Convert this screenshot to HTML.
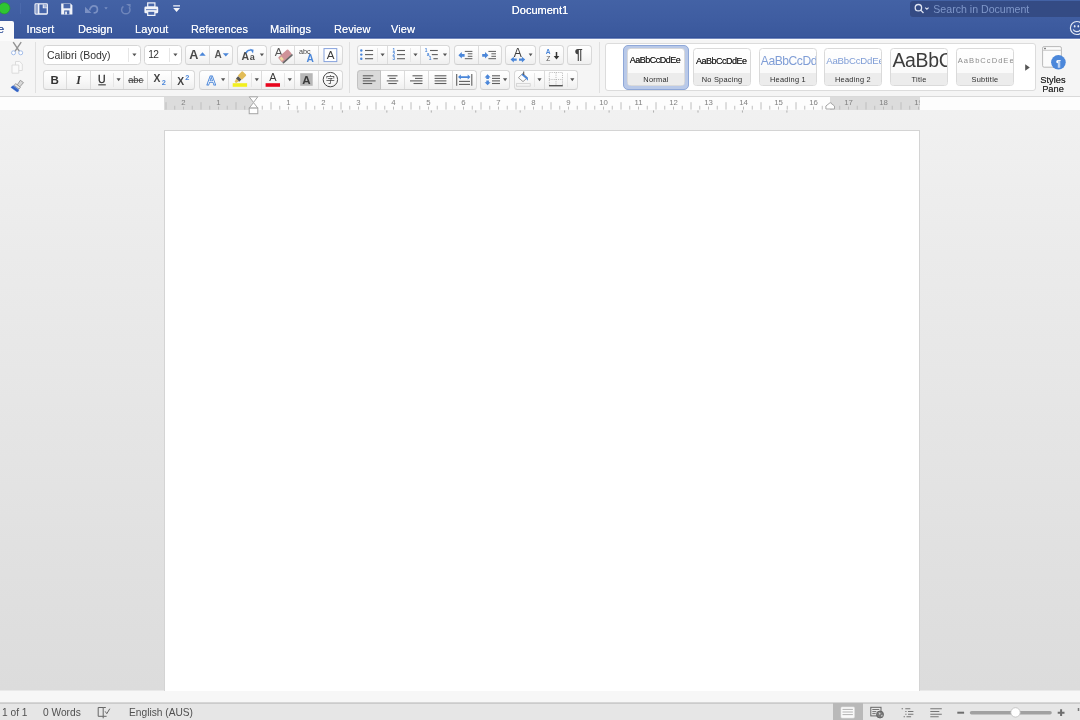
<!DOCTYPE html>
<html><head><meta charset="utf-8"><title>Document1</title>
<style>
*{box-sizing:border-box;margin:0;padding:0}
html,body{width:1080px;height:720px;overflow:hidden}
body{position:relative;filter:blur(.4px);font-family:"Liberation Sans",sans-serif;background:#e4e4e4;color:#333}
.abs{position:absolute}
#ov{left:0;top:0;pointer-events:none}
#title{left:0;top:0;width:1080px;height:40px;background:linear-gradient(#4362a5,#3f5da1 19px,#3a589c 37px,#33519a 37px,#33519a 38px,#7388bb 38px,#7388bb 39px,#fcfcfc 39px)}
.doc{position:absolute;left:0;width:1080px;top:3px;text-align:center;color:#fff;font-size:11px;line-height:14px;text-shadow:0 0 .5px #fff}
.tab{position:absolute;top:22px;color:#f6f8fc;font-size:11px;line-height:14px;white-space:nowrap;text-shadow:0 0 .4px #f6f8fc;letter-spacing:.08px}
#hometab{left:-4px;top:20.5px;width:18px;height:20px;background:#fbfbfb;border-radius:2px 2px 0 0}
#search{left:910px;top:1px;width:180px;height:16px;background:#344b84;border-radius:3px}
#search span{position:absolute;left:23.3px;top:1.3px;font-size:10.6px;line-height:14px;color:#7f97c9;white-space:nowrap}
#ribbon{left:0;top:40px;width:1080px;height:56px;background:#f5f5f5}
.grp{position:absolute;border:1px solid #d9d9d9;border-bottom-color:#cecece;border-radius:3.5px;background:linear-gradient(#fff,#f9f9f9 50%,#efefef)}
.inp{position:absolute;border:1px solid #d6d6d6;border-radius:3.5px;background:#fff}
.sep{position:absolute;width:1px;background:#dcdcdc}
.lsep{position:absolute;width:1px;background:#e6e6e6}
.vsep{position:absolute;width:1px;background:#e0e0e0;top:42px;height:51px}
.sel{position:absolute;background:#dadada;border:1px solid #c2c2c2}
#gallery{left:605px;top:43px;width:431px;height:48px;background:#fff;border:1px solid #dcdcdc;border-radius:3px}
.card{position:absolute;top:48px;width:58px;height:38px;border:1px solid #dadada;border-radius:3.5px;background:linear-gradient(#fff,#f7f7f7);overflow:hidden}
.card .lbl{position:absolute;left:0;right:0;top:24px;height:13px;background:#ececec;font-size:7.4px;line-height:14.8px;text-align:center;color:#2c2c2c;}
.card .pv{position:absolute;left:2px;white-space:nowrap;color:#333}
#selring{left:623px;top:45px;width:66px;height:45px;border-radius:5px;background:#b9c9e8;border:1px solid #8fa8d8}
.sp{position:absolute;font-size:9.3px;line-height:10px;color:#333;text-align:center;width:40px;left:1033px;text-shadow:0 0 .4px #333}
#rulerband{left:0;top:96px;width:1080px;height:14px;background:#fdfdfd;border-top:1px solid #d9d9d9}
.rg{position:absolute;top:97px;height:12.6px;background:#dcdcdc}
#docarea{left:0;top:110px;width:1080px;height:580px;border-bottom:1px solid #e9e9e9;box-sizing:content-box;background:linear-gradient(#f1f1f1,#ececec 20%,#dcdcdc)}
#page{left:164px;top:130px;width:756px;height:561px;background:#fff;border:1px solid #d4d4d4;border-bottom:none}
#hscroll{left:0;top:691px;width:1080px;height:11px;background:#f7f7f7}
#status{left:0;top:702px;width:1080px;height:18px;background:linear-gradient(#d6d6d6,#d6d6d6 1px,#cbcbcb 1px,#cbcbcb 2px,#e6e6e6 2px)}
.st{position:absolute;top:706px;font-size:10.2px;line-height:13px;color:#505050;white-space:nowrap}
#vsel{left:833px;top:703px;width:30px;height:17px;background:#b9b9b9}

</style></head><body>
<div id="title" class="abs"></div>
<div id="ribbon" class="abs"></div>
<div id="rulerband" class="abs"></div>
<div id="docarea" class="abs"></div>
<div id="page" class="abs"></div>
<div id="hscroll" class="abs"></div>
<div id="status" class="abs"></div>
<div class="doc">Document1</div>
<div id="hometab" class="abs"></div>
<div class="tab" style="left:26.5px">Insert</div>
<div class="tab" style="left:78px">Design</div>
<div class="tab" style="left:135px">Layout</div>
<div class="tab" style="left:191px">References</div>
<div class="tab" style="left:270px">Mailings</div>
<div class="tab" style="left:334px">Review</div>
<div class="tab" style="left:391px">View</div>
<div class="abs" style="left:-30px;top:22px;font-size:11px;line-height:14px;color:#3f5da1;white-space:nowrap;width:34px;text-align:right;text-shadow:0 0 .5px #3f5da1">Home</div>
<div id="search" class="abs"><span>Search in Document</span></div>
<div class="vsep" style="left:35.3px"></div>
<div class="vsep" style="left:349.3px"></div>
<div class="vsep" style="left:598.6px"></div>
<div class="inp" style="left:43px;top:45px;width:98px;height:20px;"></div>
<div class="lsep" style="left:128px;top:48px;height:14px"></div>
<div class="abs" style="left:47px;top:48.5px;font-size:10.5px;line-height:13px;color:#333;white-space:nowrap">Calibri (Body)</div>
<div class="inp" style="left:144px;top:45px;width:38px;height:20px;"></div>
<div class="lsep" style="left:168.6px;top:48px;height:14px"></div>
<div class="abs" style="left:148.2px;top:48.3px;font-size:10.2px;line-height:13px;color:#333;letter-spacing:-.7px">12</div>
<div class="grp" style="left:185px;top:45px;width:48px;height:20px;"></div>
<div class="sep" style="left:209px;top:46px;height:18px"></div>
<div class="grp" style="left:237px;top:45px;width:30px;height:20px;"></div>
<div class="grp" style="left:270px;top:45px;width:73px;height:20px;"></div>
<div class="sep" style="left:294px;top:46px;height:18px"></div>
<div class="sep" style="left:318px;top:46px;height:18px"></div>
<div class="grp" style="left:357px;top:45px;width:93px;height:20px;"></div>
<div class="sep" style="left:387px;top:46px;height:18px"></div>
<div class="sep" style="left:420px;top:46px;height:18px"></div>
<div class="lsep" style="left:377px;top:48px;height:14px"></div>
<div class="lsep" style="left:410px;top:48px;height:14px"></div>
<div class="grp" style="left:454px;top:45px;width:48px;height:20px;"></div>
<div class="sep" style="left:478px;top:46px;height:18px"></div>
<div class="grp" style="left:505px;top:45px;width:31px;height:20px;"></div>
<div class="grp" style="left:539px;top:45px;width:25px;height:20px;"></div>
<div class="grp" style="left:567px;top:45px;width:25px;height:20px;"></div>
<div class="grp" style="left:43px;top:70px;width:152px;height:20px;"></div>
<div class="sep" style="left:66px;top:71px;height:18px"></div>
<div class="sep" style="left:90px;top:71px;height:18px"></div>
<div class="sep" style="left:123px;top:71px;height:18px"></div>
<div class="sep" style="left:147px;top:71px;height:18px"></div>
<div class="sep" style="left:171px;top:71px;height:18px"></div>
<div class="lsep" style="left:113px;top:73px;height:14px"></div>
<div class="grp" style="left:199px;top:70px;width:144px;height:20px;"></div>
<div class="sep" style="left:228px;top:71px;height:18px"></div>
<div class="sep" style="left:261px;top:71px;height:18px"></div>
<div class="sep" style="left:294px;top:71px;height:18px"></div>
<div class="sep" style="left:318px;top:71px;height:18px"></div>
<div class="lsep" style="left:251px;top:73px;height:14px"></div>
<div class="lsep" style="left:284px;top:73px;height:14px"></div>
<div class="grp" style="left:357px;top:70px;width:120px;height:20px;"></div>
<div class="sep" style="left:404px;top:71px;height:18px"></div>
<div class="sep" style="left:428px;top:71px;height:18px"></div>
<div class="sep" style="left:452px;top:71px;height:18px"></div>
<div class="sel" style="left:357px;top:70px;width:24px;height:20px;border-radius:3.5px 0 0 3.5px"></div>
<div class="grp" style="left:480px;top:70px;width:30px;height:20px;"></div>
<div class="grp" style="left:514px;top:70px;width:64px;height:20px;"></div>
<div class="sep" style="left:544px;top:71px;height:18px"></div>
<div class="lsep" style="left:534px;top:73px;height:14px"></div>
<div class="lsep" style="left:567px;top:73px;height:14px"></div>
<div id="gallery" class="abs"></div>
<div id="selring" class="abs"></div>
<div class="card" style="left:627px"><div class="pv" style="line-height:14px;left:1.7px;top:4.28px;font-size:9.0px;letter-spacing:-0.5px;color:#2e2e2e;text-shadow:0 0 .12px #2e2e2e">AaBbCcDdEe</div><div class="lbl" style="letter-spacing:0.25px">Normal</div></div>
<div class="card" style="left:693px"><div class="pv" style="line-height:14px;left:1.9px;top:4.88px;font-size:9.0px;letter-spacing:-0.5px;color:#2e2e2e;text-shadow:0 0 .12px #2e2e2e">AaBbCcDdEe</div><div class="lbl" style="letter-spacing:0.25px">No Spacing</div></div>
<div class="card" style="left:759px"><div class="pv" style="line-height:14px;left:0.8px;top:4.51px;font-size:12.1px;letter-spacing:-0.45px;color:#7f9dd6;">AaBbCcDdEe</div><div class="lbl" style="letter-spacing:0.25px">Heading 1</div></div>
<div class="card" style="left:824px"><div class="pv" style="line-height:14px;left:1.2px;top:4.57px;font-size:9.6px;letter-spacing:-0.17px;color:#7f9dd6;">AaBbCcDdEe</div><div class="lbl" style="letter-spacing:0.25px">Heading 2</div></div>
<div class="card" style="left:890px"><div class="pv" style="line-height:14px;left:1.4px;top:4.18px;font-size:19.4px;letter-spacing:-0.3px;color:#3c3c3c;">AaBbCcDdEe</div><div class="lbl" style="letter-spacing:0.3px">Title</div></div>
<div class="card" style="left:956px"><div class="pv" style="line-height:14px;left:0.8px;top:4.67px;font-size:7.6px;letter-spacing:1.0px;color:#8c8c8c;">AaBbCcDdEe</div><div class="lbl" style="letter-spacing:0.3px">Subtitle</div></div>
<div class="sp" style="top:74.700px">Styles</div>
<div class="sp" style="top:84px">Pane</div>
<div class="rg" style="left:164.3px;width:88.7px"></div>
<div class="rg" style="left:830px;width:89.8px"></div>
<div id="vsel" class="abs"></div>
<div class="st" style="left:2px">1 of 1</div>
<div class="st" style="left:43px">0 Words</div>
<div class="st" style="left:129px">English (AUS)</div>
<svg class="abs" id="ov" width="1080" height="720" viewBox="0 0 1080 720" font-family="Liberation Sans, sans-serif">
<circle cx="4.3" cy="8.3" r="5.6" fill="#2fc532" stroke="#1f9c22" stroke-width=".6"/>
<path d="M20.5 3v11" stroke="#4b69ab" stroke-width="1"/>
<g><rect x="35.100" y="3.900" width="12.200" height="10.100" rx=".8" fill="#4766aa" stroke="#f2f4f9" stroke-width="1.300"/><rect x="35.700" y="4.500" width="2.200" height="8.900" fill="#8fa1cb"/><path d="M38.600 4v10" stroke="#f2f4f9" stroke-width="1.600"/><path d="M43.300 4.400v3.300h3.600" fill="none" stroke="#f2f4f9" stroke-width="1.100"/><path d="M44 4.600h2.800v2.600h-2.800z" fill="#a9b7d8"/></g>
<g><path d="M61.200 3.400h9.400l1.800 1.800v9.200h-11.200z" fill="#f2f4f9"/><rect x="63.500" y="3.900" width="6.800" height="4.400" fill="#4a68aa"/><rect x="64.200" y="10.400" width="5.200" height="4" fill="#4a68aa"/><rect x="65.200" y="11.600" width="1.700" height="2.800" fill="#f2f4f9"/></g>
<g fill="none" stroke="#7a90c3" stroke-width="1.700"><path d="M89.600 10.200c.8-2.800 2.400-4.300 4.300-4.300c2 0 3.500 1.500 3.500 3.500c0 2.200-1.500 3.500-3.800 3.500"/></g><path d="M85 6.800v6.300h6.400z" fill="#7a90c3"/>
<path d="M104.300 7.200h3.400l-1.700 2.300z" fill="#7a90c3"/>
<g fill="none" stroke="#6f86bb" stroke-width="1.500"><path d="M123.400 6.400c-1.200.9-1.800 2-1.800 3.300c0 2.300 1.900 4.100 4.200 4.100c2.300 0 4.200-1.800 4.200-4.100c0-1-.3-1.800-.9-2.500"/></g><path d="M126 3.900h4.600v3.600z" fill="#6f86bb"/>
<g><rect x="147.700" y="2.900" width="7.200" height="4.200" fill="#4a68aa" stroke="#f2f4f9" stroke-width="1.200"/><rect x="144.400" y="6.600" width="13.800" height="6.600" rx="1.300" fill="#f2f4f9"/><path d="M146 9.700h10.600" stroke="#5b78b5" stroke-width="1"/><rect x="147.700" y="11.200" width="7.200" height="4.200" fill="#4a68aa" stroke="#f2f4f9" stroke-width="1.200"/></g>
<path d="M173.200 5.200h6.800v1.400h-6.800z M173.200 7.900h6.800l-3.400 4.100z" fill="#f2f4f9"/>
<g fill="none" stroke="#dfe5f3" stroke-width="1.300"><circle cx="918.400" cy="7.700" r="3.200"/><path d="M920.700 10.100l2.800 2.900"/><path d="M925.200 7.600l1.700 1.600 1.700-1.600" stroke-width="1.100"/></g>
<g fill="none" stroke="#e3e9f5" stroke-width="1.200"><circle cx="1076.900" cy="28" r="6.500"/><path d="M1073.200 29.600c1.200 2.600 5.400 3 7.400 0"/></g><ellipse cx="1074.700" cy="26.200" rx=".8" ry="1.300" fill="#e3e9f5"/><ellipse cx="1078.300" cy="26.200" rx=".8" ry="1.300" fill="#e3e9f5"/>
<g fill="none" stroke="#929292" stroke-width="1.400"><path d="M13.200 42.200l6.600 9.600M21.200 42.200l-6.600 9.600"/></g>
<g fill="#fff" stroke="#a3bdea" stroke-width="1"><circle cx="13.500" cy="52.800" r="2"/><circle cx="20.700" cy="52.800" r="2"/></g>
<g fill="#fafafa" stroke="#dcdcdc" stroke-width="1"><path d="M15.500 61.500h4.200l2.600 2.600v6.400h-6.800z"/><path d="M12 65h6.800v8.200h-6.800z"/></g>
<g><path d="M20.300 80.300l3.200 2.300-3.600 4.200-2.600-1.900z" fill="#d8d8d8" stroke="#8c8c8c" stroke-width=".8"/><path d="M15.600 83.600l4.800 3.600-1.400 1.800-4.800-3.600z" fill="#e8e8e8" stroke="#8c8c8c" stroke-width=".8"/><path d="M13.200 85.300l6.200 4.700-2.200 2.300-6.600-4.800z" fill="#3f6fd0"/><path d="M11.800 86.800l6.600 4.800" stroke="#2a56b0" stroke-width=".8"/></g>
<path d="M132.30 53.45h4.2l-2.10 2.9z" fill="#555"/>
<path d="M173.30 53.45h4.2l-2.10 2.9z" fill="#555"/>
<text x="189.3" y="59.1" font-size="12.6" fill="#4a4a4a" font-weight="bold" text-anchor="start" >A</text>
<path d="M199.300 55.800h6.400l-3.200-3.500z" fill="#4a86d9"/>
<text x="214.5" y="58.1" font-size="10" fill="#555" font-weight="bold" text-anchor="start" >A</text>
<path d="M222.800 53.300h6l-3 3.300z" fill="#4a86d9"/>
<text x="241.4" y="59.9" font-size="10.5" fill="#4a4a4a" font-weight="bold" text-anchor="start" >A</text>
<text x="249.8" y="59.9" font-size="9" fill="#4a4a4a" font-weight="bold" text-anchor="start" >a</text>
<path d="M246.200 53.200c.5-2.300 2.300-3.300 4.600-2.900" fill="none" stroke="#4a86d9" stroke-width="1.500"/><path d="M249.800 48.700l3.800 1-.6 3.900z" fill="#4a86d9"/>
<path d="M259.80 53.45h4.2l-2.10 2.9z" fill="#555"/>
<text x="274.7" y="56.4" font-size="11.6" fill="#555" font-weight="normal" text-anchor="start" >A</text>
<g transform="rotate(-42 285 56)"><rect x="278.600" y="52.600" width="13" height="6.600" rx="1" fill="#cf9298"/><rect x="278.600" y="59" width="13" height="1.700" rx=".5" fill="#666"/><rect x="279.400" y="54" width="2.600" height="3.600" fill="#f0dca0"/></g>
<text x="299" y="53.9" font-size="7.2" fill="#444" font-weight="normal" text-anchor="start" >abc</text>
<text x="306.6" y="62.4" font-size="10.2" fill="#4a86d9" font-weight="bold" text-anchor="start" >A</text>
<rect x="324" y="48.600" width="12.800" height="13" fill="#fff" stroke="#85a1dc" stroke-width="1"/>
<text x="330.5" y="59.4" font-size="11.6" fill="#3c3c3c" font-weight="normal" text-anchor="middle" >A</text>
<circle cx="361.300" cy="50.5" r="1.200" fill="#4a86d9"/>
<path d="M365.00 50.50L373.10 50.50" stroke="#5e5e5e" stroke-width="1.1" fill="none" />
<path d="M397.00 50.50L405.00 50.50" stroke="#5e5e5e" stroke-width="1.1" fill="none" />
<circle cx="361.300" cy="54.6" r="1.200" fill="#4a86d9"/>
<path d="M365.00 54.60L373.10 54.60" stroke="#5e5e5e" stroke-width="1.1" fill="none" />
<path d="M397.00 54.60L405.00 54.60" stroke="#5e5e5e" stroke-width="1.1" fill="none" />
<circle cx="361.300" cy="58.7" r="1.200" fill="#4a86d9"/>
<path d="M365.00 58.70L373.10 58.70" stroke="#5e5e5e" stroke-width="1.1" fill="none" />
<path d="M397.00 58.70L405.00 58.70" stroke="#5e5e5e" stroke-width="1.1" fill="none" />
<path d="M380.50 53.45h4.2l-2.10 2.9z" fill="#555"/>
<path d="M413.40 53.45h4.2l-2.10 2.9z" fill="#555"/>
<path d="M442.90 53.45h4.2l-2.10 2.9z" fill="#555"/>
<text x="393.7" y="52.1" font-size="4.6" fill="#4a86d9" font-weight="bold" text-anchor="middle" >1</text>
<text x="393.7" y="56.2" font-size="4.6" fill="#4a86d9" font-weight="bold" text-anchor="middle" >2</text>
<text x="393.7" y="60.300000000000004" font-size="4.6" fill="#4a86d9" font-weight="bold" text-anchor="middle" >3</text>
<text x="426" y="52.1" font-size="4.8" fill="#4a86d9" font-weight="bold" text-anchor="middle" >1</text>
<path d="M430.00 50.50L437.80 50.50" stroke="#5e5e5e" stroke-width="1.1" fill="none" />
<text x="428.2" y="56.2" font-size="4.8" fill="#4a86d9" font-weight="bold" text-anchor="middle" >a</text>
<path d="M431.80 54.60L437.80 54.60" stroke="#5e5e5e" stroke-width="1.1" fill="none" />
<text x="430.2" y="60.3" font-size="4.8" fill="#4a86d9" font-weight="bold" text-anchor="middle" >1</text>
<path d="M433.40 58.70L437.80 58.70" stroke="#5e5e5e" stroke-width="1.1" fill="none" />
<path d="M458.40000000000003 55.300l3.400-3.300v1.900h2.800v2.800h-2.800v1.900z" fill="#4a86d9"/>
<path d="M464.80 51.40L472.40 51.40" stroke="#5e5e5e" stroke-width="1" fill="none" />
<path d="M467.80 53.80L472.40 53.80" stroke="#5e5e5e" stroke-width="1" fill="none" />
<path d="M467.80 56.30L472.40 56.30" stroke="#5e5e5e" stroke-width="1" fill="none" />
<path d="M464.80 58.70L472.40 58.70" stroke="#5e5e5e" stroke-width="1" fill="none" />
<path d="M488.4 55.300l-3.400-3.300v1.900h-2.800v2.800h2.800v1.900z" fill="#4a86d9"/>
<path d="M488.40 51.40L496.00 51.40" stroke="#5e5e5e" stroke-width="1" fill="none" />
<path d="M491.40 53.80L496.00 53.80" stroke="#5e5e5e" stroke-width="1" fill="none" />
<path d="M491.40 56.30L496.00 56.30" stroke="#5e5e5e" stroke-width="1" fill="none" />
<path d="M488.40 58.70L496.00 58.70" stroke="#5e5e5e" stroke-width="1" fill="none" />
<text x="517.7" y="56.6" font-size="12" fill="#3c3c3c" font-weight="normal" text-anchor="middle" >A</text>
<path d="M510.500 59.600l3.300-2.900v1.700h2.900v2.400h-2.900v1.700z M525.200 59.600l-3.300-2.900v1.700h-2.900v2.400h2.900v1.700z" fill="#4a86d9"/>
<path d="M528.70 53.60h3.8l-1.90 2.6z" fill="#555"/>
<text x="548.2" y="53.8" font-size="6.6" fill="#4a86d9" font-weight="bold" text-anchor="middle" >A</text>
<text x="548.2" y="61.4" font-size="6.6" fill="#555" font-weight="normal" text-anchor="middle" >Z</text>
<path d="M556.500 52v5" stroke="#333" stroke-width="1.500" fill="none"/><path d="M553.700 56l2.800 3.500 2.800-3.500z" fill="#333"/>
<text x="578.8" y="59.3" font-size="14.2" fill="#444" font-weight="bold" text-anchor="middle" >¶</text>
<text x="54.8" y="83.7" font-size="11.6" fill="#333" font-weight="bold" text-anchor="middle" >B</text>
<text x="78.5" y="83.7" font-size="12" fill="#333" font-weight="bold" text-anchor="middle" font-family="Liberation Serif, serif" font-style="italic">I</text>
<text x="101.9" y="82.9" font-size="10.6" fill="#333" font-weight="normal" text-anchor="middle" stroke="#333" stroke-width=".3">U</text>
<path d="M98.30 84.80L105.80 84.80" stroke="#555" stroke-width="1.3" fill="none" />
<path d="M116.50 78.25h4.2l-2.10 2.9z" fill="#555"/>
<text x="135.7" y="82.8" font-size="9.4" fill="#444" font-weight="normal" text-anchor="middle" >abc</text>
<path d="M128.00 80.30L143.60 80.30" stroke="#444" stroke-width="0.9" fill="none" />
<text x="156.9" y="82" font-size="10.3" fill="#444" font-weight="bold" text-anchor="middle" >X</text>
<text x="163.9" y="84.5" font-size="7.4" fill="#4a86d9" font-weight="bold" text-anchor="middle" >2</text>
<text x="180.8" y="84.5" font-size="10.3" fill="#444" font-weight="bold" text-anchor="middle" >X</text>
<text x="187.3" y="79.9" font-size="7.4" fill="#4a86d9" font-weight="bold" text-anchor="middle" >2</text>
<text x="211.2" y="84.5" font-size="13.2" fill="#fff" font-weight="bold" text-anchor="middle" stroke="#4a86d9" stroke-width=".8" stroke-linejoin="round">A</text>
<path d="M221.00 78.25h4.2l-2.10 2.9z" fill="#555"/>
<g transform="translate(-1.2 .8) rotate(44 241 77)"><rect x="238" y="70.400" width="6" height="6.600" rx=".8" fill="#e2bc57"/><rect x="238.700" y="77" width="4.600" height="3.200" fill="#555"/><path d="M239.200 80.200h3.600l-.8 3.200h-2z" fill="#e2bc57"/></g>
<rect x="232.700" y="83.200" width="14.400" height="3.600" fill="#f2ef1e"/>
<path d="M254.70 78.25h4.2l-2.10 2.9z" fill="#555"/>
<text x="272.8" y="81.2" font-size="11" fill="#3c3c3c" font-weight="normal" text-anchor="middle" >A</text>
<rect x="265.600" y="83.200" width="14.400" height="3.600" fill="#e8051d"/>
<path d="M287.70 78.25h4.2l-2.10 2.9z" fill="#555"/>
<rect x="300.200" y="73.200" width="12.500" height="12.600" fill="#b7b7b7"/>
<text x="306.5" y="83.9" font-size="11.6" fill="#3a3a3a" font-weight="bold" text-anchor="middle" >A</text>
<circle cx="330.400" cy="79.600" r="7.200" fill="none" stroke="#444" stroke-width="1"/>
<text x="330.4" y="83.2" font-size="9.2" fill="#444" font-weight="normal" text-anchor="middle" font-family="Noto Sans CJK JP, sans-serif" >字</text>
<path d="M362.80 75.80L373.30 75.80" stroke="#5e5e5e" stroke-width="1.1" fill="none" />
<path d="M362.80 78.40L370.60 78.40" stroke="#5e5e5e" stroke-width="1.1" fill="none" />
<path d="M362.80 80.90L375.60 80.90" stroke="#5e5e5e" stroke-width="1.1" fill="none" />
<path d="M362.80 83.50L372.20 83.50" stroke="#5e5e5e" stroke-width="1.1" fill="none" />
<path d="M387.50 75.80L397.50 75.80" stroke="#5e5e5e" stroke-width="1.1" fill="none" />
<path d="M389.25 78.40L395.75 78.40" stroke="#5e5e5e" stroke-width="1.1" fill="none" />
<path d="M386.75 80.90L398.25 80.90" stroke="#5e5e5e" stroke-width="1.1" fill="none" />
<path d="M388.25 83.50L396.75 83.50" stroke="#5e5e5e" stroke-width="1.1" fill="none" />
<path d="M412.50 75.80L422.50 75.80" stroke="#5e5e5e" stroke-width="1.1" fill="none" />
<path d="M415.00 78.40L422.50 78.40" stroke="#5e5e5e" stroke-width="1.1" fill="none" />
<path d="M410.00 80.90L422.50 80.90" stroke="#5e5e5e" stroke-width="1.1" fill="none" />
<path d="M413.50 83.50L422.50 83.50" stroke="#5e5e5e" stroke-width="1.1" fill="none" />
<path d="M434.60 75.80L446.40 75.80" stroke="#5e5e5e" stroke-width="1.1" fill="none" />
<path d="M434.60 78.40L446.40 78.40" stroke="#5e5e5e" stroke-width="1.1" fill="none" />
<path d="M434.60 80.90L446.40 80.90" stroke="#5e5e5e" stroke-width="1.1" fill="none" />
<path d="M434.60 83.50L446.40 83.50" stroke="#5e5e5e" stroke-width="1.1" fill="none" />
<path d="M456.70 74.00L456.70 85.80" stroke="#5e5e5e" stroke-width="1.1" fill="none" />
<path d="M471.80 74.00L471.80 85.80" stroke="#5e5e5e" stroke-width="1.1" fill="none" />
<path d="M458 77.100l2.800-2.500v1.600h6.900v-1.600l2.800 2.500-2.800 2.500v-1.600h-6.900v1.600z" fill="#4a86d9"/>
<path d="M459.00 81.40L470.00 81.40" stroke="#5e5e5e" stroke-width="1.1" fill="none" />
<path d="M459.00 84.40L470.00 84.40" stroke="#5e5e5e" stroke-width="1.1" fill="none" />
<path d="M487.600 74.300l3 3.100h-1.700v1.700h-2.600v-1.700h-1.700z M487.600 85.300l3-3.100h-1.700v-1.700h-2.600v1.700h-1.700z" fill="#4a86d9"/>
<path d="M492.00 75.80L500.00 75.80" stroke="#5e5e5e" stroke-width="1.1" fill="none" />
<path d="M492.00 78.40L500.00 78.40" stroke="#5e5e5e" stroke-width="1.1" fill="none" />
<path d="M492.00 80.90L500.00 80.90" stroke="#5e5e5e" stroke-width="1.1" fill="none" />
<path d="M492.00 83.50L500.00 83.50" stroke="#5e5e5e" stroke-width="1.1" fill="none" />
<path d="M503.00 78.25h4.2l-2.10 2.9z" fill="#555"/>
<g><path d="M522.700 73.600l4.800 4.100-4.500 3.900-4.600-3.900z" fill="#fdfdfd" stroke="#8e8e8e" stroke-width=".9"/><path d="M521.400 74.700l1.300-1.200 4.900 4.100c.5 1 .6 2 .3 3.200c-.5-.9-1-1.500-1.700-1.900z" fill="#4a86d9"/><path d="M523.700 71.500v3.400" stroke="#555" stroke-width="1.100"/></g>
<rect x="516.400" y="83.600" width="13.800" height="2.600" fill="#f4f4f4" stroke="#cfcfcf" stroke-width=".8"/>
<path d="M537.40 78.25h4.2l-2.10 2.9z" fill="#555"/>
<g fill="none" stroke="#a4a4a4" stroke-width=".8" stroke-dasharray="1 1.200"><path d="M549.300 85.500v-13h13.200v13M556 72.500v13M549.300 79.500h13.200"/></g>
<path d="M549.00 85.70L562.80 85.70" stroke="#555" stroke-width="1.4" fill="none" />
<path d="M570.20 78.25h4.2l-2.10 2.9z" fill="#555"/>
<path d="M1025.200 64.200v6.600l4.600-3.300z" fill="#555"/>
<g><rect x="1042.600" y="46.600" width="18.800" height="20.600" rx="1.500" fill="#fbfbfb" stroke="#b9b9b9" stroke-width="1"/><path d="M1042.600 50.300h18.800" stroke="#c8c8c8" stroke-width="1"/><rect x="1044.200" y="47.800" width="1.600" height="1.400" fill="#666"/><circle cx="1058.400" cy="62.300" r="7.300" fill="#4b87da"/></g>
<text x="1058.6" y="65.6" font-size="9" fill="#fff" font-weight="bold" text-anchor="middle" >¶</text>
<path d="M166.00 102.200v7.400M174.75 105.800v3.800M183.50 106.600v3M192.25 105.800v3.800M201.00 102.200v7.400M209.75 105.800v3.800M218.50 106.600v3M227.25 105.800v3.800M236.00 102.200v7.400M244.75 105.800v3.800M253.50 106.600v3M262.25 105.800v3.800M271.00 102.200v7.400M279.75 105.800v3.800M288.50 106.600v3M297.25 105.800v3.800M306.00 102.200v7.400M314.75 105.800v3.800M323.50 106.600v3M332.25 105.800v3.800M341.00 102.200v7.400M349.75 105.800v3.800M358.50 106.600v3M367.25 105.800v3.800M376.00 102.200v7.400M384.75 105.800v3.800M393.50 106.600v3M402.25 105.800v3.800M411.00 102.200v7.400M419.75 105.800v3.800M428.50 106.600v3M437.25 105.800v3.800M446.00 102.200v7.400M454.75 105.800v3.800M463.50 106.600v3M472.25 105.800v3.800M481.00 102.200v7.400M489.75 105.800v3.800M498.50 106.600v3M507.25 105.800v3.800M516.00 102.200v7.400M524.75 105.800v3.800M533.50 106.600v3M542.25 105.800v3.800M551.00 102.200v7.400M559.75 105.800v3.800M568.50 106.600v3M577.25 105.800v3.800M586.00 102.200v7.400M594.75 105.800v3.800M603.50 106.600v3M612.25 105.800v3.800M621.00 102.200v7.400M629.75 105.800v3.800M638.50 106.600v3M647.25 105.800v3.800M656.00 102.200v7.400M664.75 105.800v3.800M673.50 106.600v3M682.25 105.800v3.800M691.00 102.200v7.400M699.75 105.800v3.800M708.50 106.600v3M717.25 105.800v3.800M726.00 102.200v7.400M734.75 105.800v3.800M743.50 106.600v3M752.25 105.800v3.800M761.00 102.200v7.400M769.75 105.800v3.800M778.50 106.600v3M787.25 105.800v3.800M796.00 102.200v7.400M804.75 105.800v3.800M813.50 106.600v3M822.25 105.800v3.800M831.00 102.200v7.400M839.75 105.800v3.800M848.50 106.600v3M857.25 105.800v3.800M866.00 102.200v7.400M874.75 105.800v3.800M883.50 106.600v3M892.25 105.800v3.800M901.00 102.200v7.400M909.75 105.800v3.800M918.50 106.600v3" stroke="#bebebe" stroke-width="1" fill="none"/>
<clipPath id="rc"><rect x="164.3" y="96" width="755.4" height="14"/></clipPath><g clip-path="url(#rc)">
<text x="183.5" y="104.7" font-size="7.8" fill="#808080" font-weight="normal" text-anchor="middle" >2</text>
<text x="218.5" y="104.7" font-size="7.8" fill="#808080" font-weight="normal" text-anchor="middle" >1</text>
<text x="288.5" y="104.7" font-size="7.8" fill="#808080" font-weight="normal" text-anchor="middle" >1</text>
<text x="323.5" y="104.7" font-size="7.8" fill="#808080" font-weight="normal" text-anchor="middle" >2</text>
<text x="358.5" y="104.7" font-size="7.8" fill="#808080" font-weight="normal" text-anchor="middle" >3</text>
<text x="393.5" y="104.7" font-size="7.8" fill="#808080" font-weight="normal" text-anchor="middle" >4</text>
<text x="428.5" y="104.7" font-size="7.8" fill="#808080" font-weight="normal" text-anchor="middle" >5</text>
<text x="463.5" y="104.7" font-size="7.8" fill="#808080" font-weight="normal" text-anchor="middle" >6</text>
<text x="498.5" y="104.7" font-size="7.8" fill="#808080" font-weight="normal" text-anchor="middle" >7</text>
<text x="533.5" y="104.7" font-size="7.8" fill="#808080" font-weight="normal" text-anchor="middle" >8</text>
<text x="568.5" y="104.7" font-size="7.8" fill="#808080" font-weight="normal" text-anchor="middle" >9</text>
<text x="603.5" y="104.7" font-size="7.8" fill="#808080" font-weight="normal" text-anchor="middle" >10</text>
<text x="638.5" y="104.7" font-size="7.8" fill="#808080" font-weight="normal" text-anchor="middle" >11</text>
<text x="673.5" y="104.7" font-size="7.8" fill="#808080" font-weight="normal" text-anchor="middle" >12</text>
<text x="708.5" y="104.7" font-size="7.8" fill="#808080" font-weight="normal" text-anchor="middle" >13</text>
<text x="743.5" y="104.7" font-size="7.8" fill="#808080" font-weight="normal" text-anchor="middle" >14</text>
<text x="778.5" y="104.7" font-size="7.8" fill="#808080" font-weight="normal" text-anchor="middle" >15</text>
<text x="813.5" y="104.7" font-size="7.8" fill="#808080" font-weight="normal" text-anchor="middle" >16</text>
<text x="848.5" y="104.7" font-size="7.8" fill="#808080" font-weight="normal" text-anchor="middle" >17</text>
<text x="883.5" y="104.7" font-size="7.8" fill="#808080" font-weight="normal" text-anchor="middle" >18</text>
<text x="918.5" y="104.7" font-size="7.8" fill="#808080" font-weight="normal" text-anchor="middle" >19</text>
</g>
<path d="M297.95 110.400v2.200M342.40 110.400v2.200M386.85 110.400v2.200M431.30 110.400v2.200M475.75 110.400v2.200M520.20 110.400v2.200M564.65 110.400v2.200M609.10 110.400v2.200M653.55 110.400v2.200M698.00 110.400v2.200M742.45 110.400v2.200M786.90 110.400v2.200" stroke="#b0b0b0" stroke-width="1" fill="none"/>
<g fill="#fff" stroke="#a6a6a6" stroke-width="1"><path d="M249.200 96.800h8.600l-4.300 5.600z"/><path d="M253.500 102.600l4.300 5.500h-8.600z"/><rect x="249.200" y="108.100" width="8.600" height="5.600"/><path d="M830.200 102.600l4.300 3.400v3h-8.600v-3z"/></g>
<g fill="none" stroke="#666" stroke-width="1"><path d="M98.200 707.500h5v8.800h-5zM103.200 707.500h2.600M103.200 716.300h3.400"/><path d="M105.200 711.400l1.600 2.300 3-5"/><path d="M103.200 716.300v2"/></g>
<g><rect x="841" y="707" width="13.400" height="11" rx="1" fill="#fafafa" stroke="#e4e4e4" stroke-width=".6"/><path d="M842.500 709.400h10.400M842.500 712h10.400M842.500 714.600h10.400" stroke="#aaa" stroke-width=".9"/></g>
<g><rect x="870.800" y="707.300" width="10.200" height="8.600" fill="#e9e9e9" stroke="#666" stroke-width="1"/><path d="M872.300 709.500h7M872.300 711.600h4M872.300 713.600h3.400" stroke="#666" stroke-width=".9"/><circle cx="880" cy="714.500" r="3.500" fill="#7a7a7a" stroke="#5a5a5a" stroke-width=".8"/><path d="M878.600 712.600l1.600.2.400 1.200-1.400.8zM881 715.200l1.400-.4.200 1.400-1 .6z" fill="#cfcfcf"/></g>
<g stroke="#777" stroke-width="1.100"><path d="M901.600 708.700h1.400M905.300 708.700h5M905.300 711.500h1.200M908 711.500h5.400M905.300 714.200h1.200M908 714.200h5.400M903.600 716.800h1.400M906.500 716.800h4.600"/></g>
<g stroke="#777" stroke-width="1.100"><path d="M930.300 708.700h11.500M930.300 711.500h9M930.300 714.200h11.500M930.300 716.800h8.400"/></g>
<path d="M957.300 712.700h6.800" stroke="#6e6e6e" stroke-width="2"/>
<rect x="969.800" y="710.900" width="82" height="3.600" rx="1.800" fill="#a0a0a0"/>
<circle cx="1015.500" cy="712.400" r="4.700" fill="#fff" stroke="#bdbdbd" stroke-width=".8"/>
<path d="M1057.700 712.700h6.800M1061.100 709.300v6.800" stroke="#6e6e6e" stroke-width="2"/>
<path d="M1078.500 708v3" stroke="#777" stroke-width="1.500"/>
</svg>
</body></html>
